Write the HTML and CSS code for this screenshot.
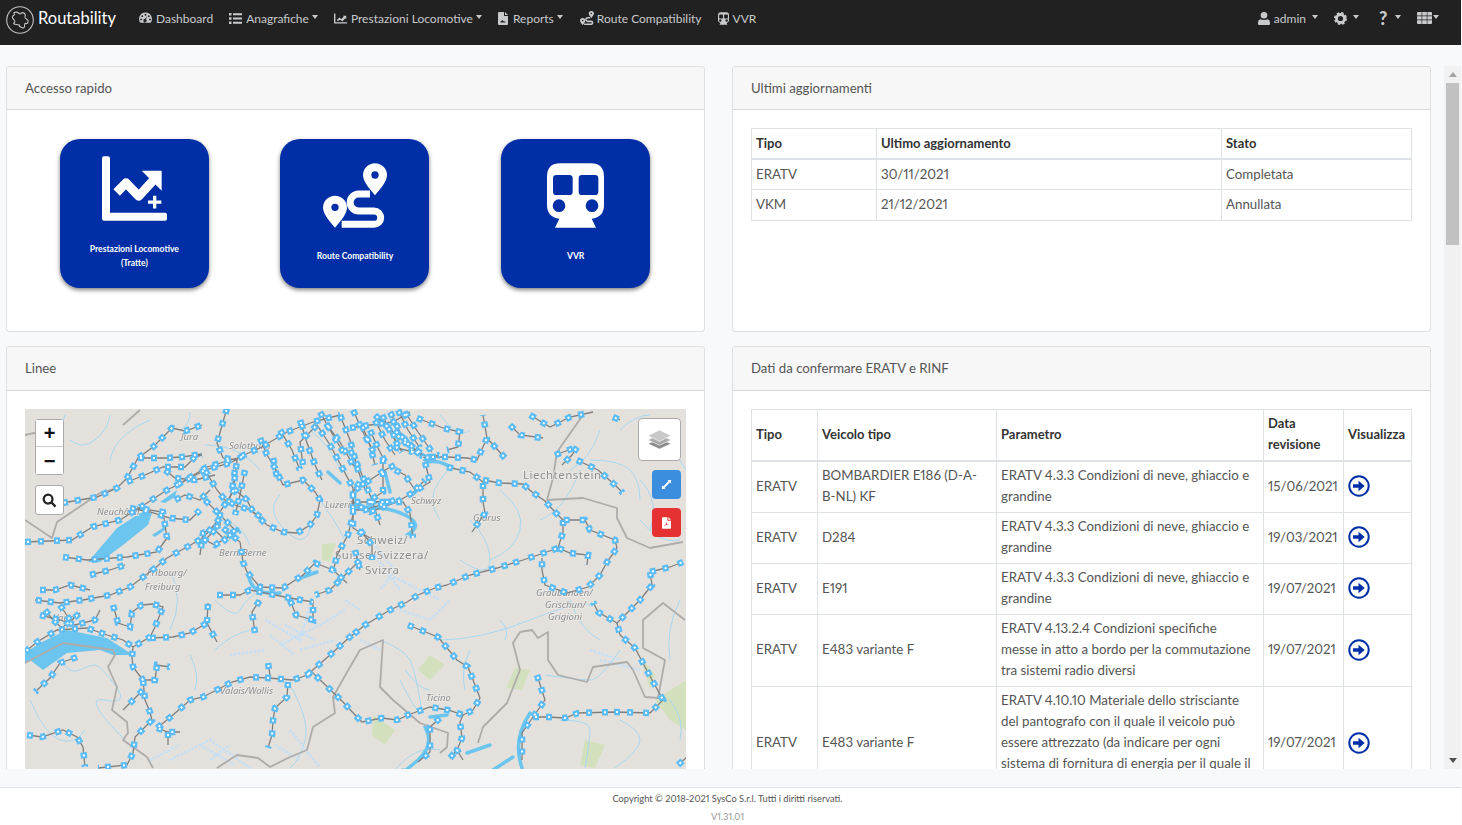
FILE: index.html
```html
<!DOCTYPE html>
<html lang="it">
<head>
<meta charset="utf-8">
<title>Routability</title>
<link rel="stylesheet" href="styles.css">
</head>
<body>
<svg class="sprite" aria-hidden="true">
  <symbol id="i-gauge" viewBox="0 0 14 12"><path fill-rule="evenodd" d="M7 0a7 7 0 0 1 6 10.500q-.3.500-1 .500H2q-.7 0-1-.500A7 7 0 0 1 7 0ZM7 1.500a1 1 0 1 0 0 2 1 1 0 0 0 0-2ZM3.500 3a1 1 0 1 0 0 2 1 1 0 0 0 0-2ZM10.500 3a1 1 0 1 0 0 2 1 1 0 0 0 0-2ZM2.200 6.500a1 1 0 1 0 0 2 1 1 0 0 0 0-2ZM11.800 6.500a1 1 0 1 0 0 2 1 1 0 0 0 0-2ZM8.400 4 6.300 7.200a1.700 1.700 0 1 0 1.300.500Z"/></symbol>
  <symbol id="i-list" viewBox="0 0 13 11"><path d="M0 0h2.500v2.500H0zM4 .3h9v2H4zM0 4.200h2.500v2.500H0zM4 4.500h9v2H4zM0 8.500h2.500V11H0zM4 8.700h9v2H4z"/></symbol>
  <symbol id="i-chart" viewBox="0 0 14 11"><path d="M0 0h1.500v9.500H14V11H1q-1 0-1-1z"/><path d="M3 7.200 6 4.300l2 1.800 2.500-2.600-1-1h3.700v3.700l-1-1-3.300 3.400-2-1.800L4 8.300z"/></symbol>
  <symbol id="i-file" viewBox="0 0 10 13"><path fill-rule="evenodd" d="M1 0h5v3.500q0 .5.500.5H10v8q0 1-1 1H1q-1 0-1-1V1q0-1 1-1ZM7 0l3 3H7ZM2.500 9.500v1h5v-1H5.800L4.500 8Z"/></symbol>
  <symbol id="i-route" viewBox="849 100 192 193"><path fill-rule="evenodd" d="M1005 100a36 36 0 0 1 36 36c0 20-24 45-36 60-12-15-36-40-36-60a36 36 0 0 1 36-36ZM1005 124a11 11 0 1 0 0 22 11 11 0 0 0 0-22ZM885 197a36 36 0 0 1 36 36c0 20-24 45-36 60-12-15-36-40-36-60a36 36 0 0 1 36-36ZM885 221a11 11 0 1 0 0 22 11 11 0 0 0 0-22Z"/><path fill="none" stroke="currentColor" stroke-width="21" d="M990 192H956A25.500 25.500 0 0 0 956 243H1002A20 20 0 0 1 1002 283H905"/></symbol>
  <symbol id="i-train" viewBox="171 100 171 193"><path fill-rule="evenodd" d="M211 100H302Q342 100 342 140V225Q342 262 305 266L318 293H195L208 266Q171 262 171 225V140Q171 100 211 100ZM199 135H238q10 0 10 10V185q0 10-10 10H199q-10 0-10-10V145q0-10 10-10ZM276 135H315q10 0 10 10V185q0 10-10 10H276q-10 0-10-10V145q0-10 10-10ZM188 227a19 19 0 1 0 38 0a19 19 0 1 0-38 0ZM287 227a19 19 0 1 0 38 0a19 19 0 1 0-38 0Z"/></symbol>
  <symbol id="i-user" viewBox="0 0 12 13"><circle cx="6" cy="3.300" r="3.300"/><path d="M2.500 7.300q3.500 1.500 7 0Q12 7.800 12 10.500V12q0 1-1 1H1q-1 0-1-1v-1.500Q0 7.800 2.500 7.300Z"/></symbol>
  <symbol id="i-cog" viewBox="0 0 14 14"><circle cx="7" cy="7" r="4.300" fill="none" stroke="currentColor" stroke-width="3"/><circle cx="7" cy="7" r="6" fill="none" stroke="currentColor" stroke-width="2" stroke-dasharray="2.700 2.010"/></symbol>
  <symbol id="i-grid" viewBox="0 0 15 12"><path d="M0 1q0-1 1-1h3.600v3.500H0ZM5.200 0h4.600v3.500H5.200ZM10.400 0H14q1 0 1 1v2.500h-4.600ZM0 4.200h4.600v3.300H0ZM5.200 4.200h4.600v3.300H5.200ZM10.400 4.200H15v3.300h-4.600ZM0 8.200h4.600V12H1q-1 0-1-1ZM5.200 8.200h4.600V12H5.200ZM10.400 8.200H15V11q0 1-1 1h-3.600Z"/></symbol>
  <symbol id="i-go" viewBox="0 0 22 22"><circle cx="11" cy="11" r="9.700" fill="#fff" stroke="currentColor" stroke-width="2"/><path d="M5 9.300h5.500V5.800L16.700 11l-6.200 5.200v-3.500H5z"/></symbol>
</svg>

<nav class="topbar">
  <a class="brand" href="#">
    <svg class="brand-logo" viewBox="0 0 28 28"><circle cx="14" cy="14" r="13.300"/><path d="M8 6.500q3-1 4.500.5t3 0q1.500-1 3 .5t.5 3q-.5 1.500 1.500 2.500t1.500 3-2 1.500-1.500 2.500-3 1.500-2-2-3-1-2.500-1.500.5-2.500-2-2.500q-.5-2 1-2.500t.5-2.500Z"/></svg>
    <span>Routability</span>
  </a>
  <ul class="menu">
    <li><a href="#"><svg class="ico ico-gauge"><use href="#i-gauge"/></svg>Dashboard</a></li>
    <li><a href="#" class="drop"><svg class="ico ico-list"><use href="#i-list"/></svg>Anagrafiche</a></li>
    <li><a href="#" class="drop"><svg class="ico ico-chart"><use href="#i-chart"/></svg>Prestazioni Locomotive</a></li>
    <li><a href="#" class="drop"><svg class="ico ico-file"><use href="#i-file"/></svg>Reports</a></li>
    <li><a href="#"><svg class="ico ico-route"><use href="#i-route"/></svg>Route Compatibility</a></li>
    <li><a href="#"><svg class="ico ico-train"><use href="#i-train"/></svg>VVR</a></li>
  </ul>
  <ul class="menu menu-end">
    <li><a href="#" class="drop wide"><svg class="ico ico-user"><use href="#i-user"/></svg>admin</a></li>
    <li><a href="#" class="drop wide"><svg class="ico ico-cog"><use href="#i-cog"/></svg></a></li>
    <li class="li-help"><a href="#" class="drop wide"><span class="help">?</span></a></li>
    <li><a href="#" class="drop tight"><svg class="ico ico-grid"><use href="#i-grid"/></svg></a></li>
  </ul>
</nav>

<main class="scroller">
  <div class="dash">
    <section class="card card-short">
      <h2 class="card-title">Accesso rapido</h2>
      <div class="card-body tiles">
        <a class="tile" href="#">
          <svg class="tile-chart" viewBox="186 78 195 194">
            <path fill="#fff" d="M186 84q0-6 6-6h12q6 0 6 6V248H375q6 0 6 6v12q0 6-6 6H192q-6 0-6-6z"/>
            <path fill="none" stroke="#fff" stroke-width="27" stroke-linejoin="round" d="M230 187 258 158 296 198 340 150"/>
            <path fill="#fff" d="M305 122H365V182Z"/>
            <circle cx="344" cy="216" r="28" fill="#002ea6"/>
            <path fill="#fff" d="M339 197h10v14h15v10h-15v14h-10v-14h-15v-10h15z"/>
          </svg>
          <span>Prestazioni Locomotive<br>(Tratte)</span>
        </a>
        <a class="tile" href="#"><svg class="tile-route"><use href="#i-route"/></svg><span>Route Compatibility</span></a>
        <a class="tile" href="#"><svg class="tile-train"><use href="#i-train"/></svg><span>VVR</span></a>
      </div>
    </section>

    <section class="card card-short">
      <h2 class="card-title">Ultimi aggiornamenti</h2>
      <div class="card-body">
        <table class="grid grid-short">
          <thead><tr><th class="c-a">Tipo</th><th class="c-b">Ultimo aggiornamento</th><th>Stato</th></tr></thead>
          <tbody>
            <tr><td>ERATV</td><td>30/11/2021</td><td>Completata</td></tr>
            <tr><td>VKM</td><td>21/12/2021</td><td>Annullata</td></tr>
          </tbody>
        </table>
      </div>
    </section>

    <section class="card">
      <h2 class="card-title">Linee</h2>
      <div class="card-body">
        <div class="map">
          <svg class="map-art" viewBox="25 409 661 440">
            <defs>
              <g id="rails">
                <path d="M25 542 72 540 92 527 120 520 147 503 167 490 183 482 205 470 230 463 245 455"/>
                <path d="M62 503 97 497 117 488 127 478 138 458 153 447 172 428 185 431 202 425"/>
                <path d="M127 482 145 475 163 467 185 467 195 457 202 455M138 458 165 458 182 457 202 454"/>
                <path d="M227 408 217 443 223 458 237 460 233 492 220 512 220 525 203 533 200 555"/>
                <path d="M177 485 207 467 237 458 260 448 287 432 313 422 340 415"/>
                <path d="M260 438 267 455 275 468 283 485 303 480 315 492 320 500 317 515 310 525 297 533 283 532 267 525 253 512 247 500 233 488"/>
                <path d="M223 528 240 542 243 562 247 572 260 587 283 588 303 575 315 563 333 570 347 583"/>
                <path d="M220 518 203 538 187 547 167 558 155 568 130 587 110 595 83 600 60 603 35 600"/>
                <path d="M63 557 87 560 127 557 157 552 167 538 163 512 137 508"/>
                <path d="M217 595 240 595 250 590 290 598 313 602"/>
                <path d="M303 465 300 442 317 425 330 445 353 488 353 515 348 535 337 555 333 572"/>
                <path d="M273 458 277 477M327 425 340 442 353 465 357 468"/>
                <path d="M375 415 393 432 413 448 427 457 447 457 467 458 477 460 487 438 483 415M505 458 487 438"/>
                <path d="M350 428 370 425 393 422 410 412M393 432 397 448 413 452M400 435 423 457"/>
                <path d="M417 418 443 428 460 432 458 447 447 450"/>
                <path d="M510 425 520 435 543 438M530 415 550 427 570 417 593 412M613 417 620 420"/>
                <path d="M425 462 430 482 412 493 397 502 370 512 352 502 390 502"/>
                <path d="M447 467 470 472 483 482 483 502 485 513 472 532"/>
                <path d="M483 480 500 483 523 484 532 492 545 501 555 512 563 520 585 520 590 530 615 540 617 548 607 562 600 575 588 587 567 593 545 585 542 570 542 558"/>
                <path d="M563 520 563 532 558 548 538 555 523 560 497 568 470 575 447 585 435 588 418 595 407 602 390 610 365 625 350 637"/>
                <path d="M558 548 570 553 588 555 587 565"/>
                <path d="M577 447 572 455 562 465M577 460 598 470 615 485 623 493M555 455 577 447"/>
                <path d="M650 572 670 567 683 562M650 572 652 585 640 600 633 607 617 623 598 612 593 602"/>
                <path d="M383 458 383 492 367 502 403 502 410 513 413 538M360 482 353 492 353 528 370 538"/>
                <path d="M25 652 37 642 57 630 87 628 107 635 123 640 133 647 132 657 133 667 143 680 155 680 157 665 170 667"/>
                <path d="M45 610 53 620 62 628 80 613M113 605 118 623 130 627 132 612 142 605 153 604 163 607 155 627 150 637 133 647"/>
                <path d="M150 638 173 637 190 633 207 623 217 642M207 623 208 603"/>
                <path d="M143 690 123 710M143 680 145 700 150 712 152 720 135 737 133 753 127 765 98 768"/>
                <path d="M157 728 173 715 190 700 203 697 232 682 250 677 268 678 293 680 307 675 312 672 343 702 357 717 362 722 382 718 397 720 408 715 430 707 448 710 463 715 460 722 462 738 457 750 463 760"/>
                <path d="M288 682 287 697 275 708 273 720 272 735 268 748"/>
                <path d="M307 675 330 655 352 635"/>
                <path d="M157 728 168 732 180 732M168 732 168 745"/>
                <path d="M27 735 42 737 63 730 77 737 83 747 85 767"/>
                <path d="M77 657 60 663 50 678 35 692"/>
                <path d="M268 663 270 675M255 633 252 612 260 600"/>
                <path d="M290 600 296 615 313 620 313 600"/>
                <path d="M408 625 438 637 457 660 468 667 480 698 473 710 463 715"/>
                <path d="M440 718 430 727 430 742 430 752 418 762"/>
                <path d="M537 675 545 700 533 717 522 733 522 760"/>
                <path d="M533 717 548 717 565 718 578 713 615 712 650 713 663 700 645 667 635 648 620 635 617 623"/>
                <path d="M678 765 687 757M450 758 457 750"/>
                <path d="M375 420 385 440 395 455M382 415 392 435 402 452M390 412 400 432 412 450M398 410 408 430 420 448M405 412 418 432 432 452M370 430 378 448 385 462M362 425 370 445 375 465"/>
                <path d="M300 420 306 440 315 465 322 480M340 415 350 440 358 470 365 490M320 412 330 430 345 455M350 450 360 470 372 500 380 525M353 410 362 430 375 455M280 430 292 450 300 470"/>
                <path d="M40 615 60 620 75 625 95 620 100 610M40 590 55 590 70 585 90 590M60 605 70 620"/>
                <path d="M205 500 215 510 225 520 235 530 225 540 215 530 205 540 215 545 230 535 240 530"/>
                <path d="M205 470 217 490 225 500 235 505 250 510 265 520M175 500 185 495 200 500 210 490M130 508 150 512 170 518 190 520 200 510M165 470 175 478 195 480 215 475"/>
                <path d="M235 470 232 490 228 505M245 470 240 495 235 515M360 560 345 575 330 590 315 595M90 575 110 570 125 565"/>
                <path d="M350 510 365 510 380 505 395 500M355 490 370 480 385 470 395 465M360 530 372 545 372 560M395 470 405 475 415 490 425 480M355 550 360 570M395 430 407 445 425 458 440 455"/>
              </g>
            </defs>
            <rect class="land" x="25" y="409" width="661" height="440"/>
            <g class="green">
              <path d="M322 544 336 543 330 562 322 560Z"/><path d="M515 668 530 670 522 690 506 688Z"/>
              <path d="M373 715 395 730 385 745 372 735Z"/><path d="M655 700 686 680 686 730 670 720Z"/>
              <path d="M430 655 445 665 430 680 418 670Z"/><path d="M585 740 605 745 595 768 580 765Z"/>
              <path d="M640 655 655 675 650 690Z"/>
            </g>
            <g class="rivers">
              <path d="M70 440Q82 450 95 440T110 415M110 460Q115 435 150 420M190 412Q190 425 180 430M205 445Q240 445 260 470M280 495Q265 510 285 530T310 528M320 500Q335 520 345 540"/>
              <path d="M215 520Q240 520 250 545M170 570Q185 600 170 630M215 600Q235 620 240 610T260 590M310 430Q330 445 340 470"/>
              <path d="M440 520Q425 500 440 480T455 470M470 520Q490 540 490 560T460 560M500 490Q525 510 520 530T490 560M540 520Q565 510 580 470M590 460Q620 460 630 470T640 500M640 520Q660 545 680 540"/>
              <path d="M620 430Q635 415 650 415M660 445Q675 450 686 470M570 600Q580 630 600 640M680 600Q665 630 670 660"/>
              <path d="M60 660Q70 675 80 670T95 665 115 685 105 700 125 740M30 700Q45 735 60 740T85 730M190 655Q200 675 195 690M250 630Q230 635 215 650"/>
              <path d="M380 640Q405 650 410 660T420 700 400 680M405 670Q420 690 430 690M440 640Q480 640 530 620T590 605M620 650Q600 680 590 680T545 675"/>
              <path d="M560 720Q590 720 590 730T585 768M620 720Q640 730 640 740T615 768M670 700Q685 720 680 740M290 685Q310 720 305 740T290 768M470 650Q460 670 465 690"/>
              <path d="M395 770Q415 745 440 750M500 620Q510 630 505 640M65 415Q60 440 35 450M440 415Q460 440 470 430M600 430Q590 460 570 470M640 480Q660 500 650 530"/>
            </g>
            <g class="glacier">
              <path d="M265 620 300 640 310 605M280 645 320 625 345 610M300 650 335 640M230 655 265 650M285 625 315 640M270 635 295 655"/>
              <path d="M170 760 210 740 250 768M200 745 235 765M290 730 320 768M275 745 300 760M150 760 180 745M210 760 230 745"/>
              <path d="M370 540 395 570 380 590M390 575 440 600M345 600 360 610M600 660 640 670M360 640 380 650M375 555 400 590"/>
              <path d="M400 610 430 620 450 600M590 650 620 660"/>
            </g>
            <g class="lakes">
              <path d="M88 562 117 528 140 513 152 513 148 525 123 545 100 562Z"/>
              <path d="M160 502 177 490 175 497 165 503Z"/>
              <path d="M152 535 167 525 165 530 155 537Z"/>
              <path d="M25 653 40 643 67 630 107 638 133 655 113 655 100 650 67 653 43 670 30 660 25 663Z"/>
            </g>
            <g class="lake-lines">
              <path d="M248 575Q252 590 262 592T280 593"/><path d="M303 577 317 572"/><path d="M328 472 340 483"/>
              <path d="M427 462Q440 460 450 467"/><path d="M385 472 390 492"/>
              <path d="M353 508Q385 505 405 515T407 535"/>
              <path d="M425 727Q435 745 418 760T403 770M430 717 447 715"/>
              <path d="M530 713Q512 740 522 768M513 757 493 770"/><path d="M467 753 490 745"/>
            </g>
            <g class="borders">
              <path d="M583 415 557 452 553 478 547 500 583 498 617 508 617 518 627 538 650 548 683 542"/>
              <path d="M25 435 57 428M123 425 140 410M25 520 52 538 57 522 100 493 117 488"/>
              <path d="M25 663 63 643 113 650 115 655 108 667 117 687 112 710 127 722 128 733 123 740 133 747 147 757 153 768"/>
              <path d="M217 768 237 755 258 758 270 767 290 757 307 750 313 727 335 713 333 697 350 667 360 650 383 640 380 687 393 700 420 723 448 733 447 747 440 753"/>
              <path d="M478 743 483 727 507 703 520 670 513 643 520 632 532 630 538 638 548 632 548 660 558 675 587 682 593 667 627 662 633 670 645 697 658 698 665 660 643 648 643 620 663 603 685 620"/>
            </g>
            <g class="labels">
              <text x="181" y="440">Jura</text><text x="229" y="449">Solothurn</text>
              <text x="97" y="515">Neuchâtel</text><text x="219" y="556">Bern/Berne</text>
              <text x="147" y="576">Fribourg/</text><text x="145" y="590">Freiburg</text>
              <text x="325" y="508">Luzern</text><text x="411" y="504">Schwyz</text>
              <text x="473" y="521">Glarus</text><text x="53" y="621">Vaud</text>
              <text x="220" y="694">Valais/Wallis</text><text x="426" y="701">Ticino</text>
              <text x="536" y="596">Graubünden/</text><text x="545" y="608">Grischun/</text><text x="548" y="620">Grigioni</text>
            </g>
            <g class="labels-big">
              <text x="523" y="479">Liechtenstein</text><text x="357" y="544">Schweiz/</text>
              <text x="335" y="559">Suisse/Svizzera/</text><text x="365" y="574">Svizra</text>
            </g>
            <use href="#rails" class="line"/>
            <use href="#rails" class="pin"/>
            <use href="#rails" class="pin-dot"/>
          </svg>
          <div class="map-zoom">
            <button class="map-btn">+</button>
            <button class="map-btn">&minus;</button>
          </div>
          <button class="map-search">
            <svg viewBox="0 0 16 16"><circle cx="6.500" cy="6.500" r="4.700"/><path d="M10 10l4.500 4.500"/></svg>
          </button>
          <div class="map-layers">
            <svg viewBox="0 0 26 26"><path class="l3" d="M13 12 25 17.500 13 23 1 17.500Z"/><path class="l2" d="M13 8 25 13.500 13 19 1 13.500Z"/><path class="l1" d="M13 3 25 9 13 15 1 9Z"/></svg>
          </div>
          <button class="map-action action-expand">
            <svg viewBox="0 0 12 12"><path d="M7 1h4v4L9.700 3.700 3.700 9.700 5 11H1V7l1.300 1.300 6-6Z"/></svg>
          </button>
          <button class="map-action action-pdf">
            <svg viewBox="0 0 10 13"><path fill-rule="evenodd" d="M1 0h5v3.500q0 .5.500.5H10v8q0 1-1 1H1q-1 0-1-1V1q0-1 1-1ZM7 0l3 3H7ZM2 9.800 4.300 8l.7-2.300.8 2.100L8 8.600l-2.300-.1-1 .3Z"/></svg>
          </button>
        </div>
      </div>
    </section>

    <section class="card">
      <h2 class="card-title">Dati da confermare ERATV e RINF</h2>
      <div class="card-body">
        <table class="grid grid-long">
          <thead>
            <tr><th class="c-1">Tipo</th><th class="c-2">Veicolo tipo</th><th class="c-3">Parametro</th><th class="c-4">Data revisione</th><th>Visualizza</th></tr>
          </thead>
          <tbody>
            <tr><td>ERATV</td><td>BOMBARDIER E186 (D-A-<br>B-NL) KF</td><td>ERATV 4.3.3 Condizioni di neve, ghiaccio e grandine</td><td>15/06/2021</td><td><svg class="go"><use href="#i-go"/></svg></td></tr>
            <tr><td>ERATV</td><td>D284</td><td>ERATV 4.3.3 Condizioni di neve, ghiaccio e grandine</td><td>19/03/2021</td><td><svg class="go"><use href="#i-go"/></svg></td></tr>
            <tr><td>ERATV</td><td>E191</td><td>ERATV 4.3.3 Condizioni di neve, ghiaccio e grandine</td><td>19/07/2021</td><td><svg class="go"><use href="#i-go"/></svg></td></tr>
            <tr><td>ERATV</td><td>E483 variante F</td><td>ERATV 4.13.2.4 Condizioni specifiche<br>messe in atto a bordo per la commutazione<br>tra sistemi radio diversi</td><td>19/07/2021</td><td><svg class="go"><use href="#i-go"/></svg></td></tr>
            <tr><td>ERATV</td><td>E483 variante F</td><td>ERATV 4.10.10 Materiale dello strisciante del pantografo con il quale il veicolo può essere attrezzato (da indicare per ogni sistema di fornitura di energia per il quale il veicolo è attrezzato)</td><td>19/07/2021</td><td><svg class="go"><use href="#i-go"/></svg></td></tr>
          </tbody>
        </table>
      </div>
    </section>
  </div>
  <div class="rail" aria-hidden="true">
    <span class="rail-up"></span>
    <span class="rail-thumb"></span>
    <span class="rail-down"></span>
  </div>
</main>

<footer class="foot">
  <p>Copyright © 2018-2021 SysCo S.r.l. Tutti i diritti riservati.</p>
  <p class="ver">V1.31.01</p>
</footer>
</body>
</html>
```

FILE: styles.css
```css
* { box-sizing: border-box; }
html, body { height: 100%; }
body {
  margin: 0;
  padding-right: 1px;
  display: flex;
  flex-direction: column;
  overflow: hidden;
  background: #f8f9fa;
  color: #555;
  font-family: "Lato", "Noto Sans", sans-serif;
  font-size: 13.3px;
  line-height: 21px;
  font-variant-numeric: proportional-nums;
}
a { color: inherit; text-decoration: none; }
.sprite { display: none; }

/* top bar */
.topbar {
  flex: none;
  height: 45px;
  display: flex;
  align-items: center;
  padding: 0 22px 9px 6px;
  background: #212121;
  color: #c8cacc;
}
.brand { display: flex; align-items: center; margin-right: 23px; color: #fff; font-size: 16.5px; }
.brand-logo { width: 28px; height: 28px; margin-right: 4px; margin-top: 3px; fill: none; stroke: #c4c4c4; stroke-width: 1.1; }
.menu { display: flex; align-items: center; gap: 16px; margin: 0; padding: 0; list-style: none; font-size: 12px; }
.menu-end { margin-left: auto; }
.menu a { display: flex; align-items: center; height: 21px; }
.drop::after {
  content: "";
  margin-left: 3px;
  border-top: 4px solid currentColor;
  border-left: 3.5px solid transparent;
  border-right: 3.5px solid transparent;
  transform: translateY(-1px);
}
.drop.wide::after { margin-left: 6px; }
.drop.tight::after { margin-left: 1px; }
.li-help { margin: 0 0 0 4px; }
.ico { fill: currentColor; color: #c8cacc; margin-right: 4px; height: 13px; }
.ico-gauge { width: 13px; height: 12px; }
.ico-list { width: 13px; height: 11px; margin-right: 4px; }
.ico-chart { width: 13px; height: 11px; }
.ico-file { width: 10px; height: 13px; margin-right: 5px; }
.ico-route { width: 14px; height: 14px; margin: 0 3px 0 1px; }
.ico-train { width: 11px; height: 13px; }
.ico-user { width: 12px; height: 13px; }
.ico-cog { width: 13px; height: 13px; margin-right: 0; }
.ico-grid { width: 15px; height: 12px; margin-right: 0; }
.help { font-size: 18px; font-weight: 900; width: 10px; }

/* scrolling dashboard */
.scroller {
  position: relative;
  flex: none;
  height: 703px;
  margin-top: 21px;
  padding: 0 13px 0 6px;
  overflow: hidden;
}
.rail {
  position: absolute;
  right: 0;
  top: 0;
  bottom: 0;
  width: 17px;
  padding: 0 2px;
  display: flex;
  flex-direction: column;
  background: #f1f1f1;
}
.rail-up, .rail-down { display: flex; justify-content: center; align-items: center; flex: none; height: 17px; }
.rail-up::before { content: ""; border-bottom: 5px solid #a3a3a3; border-left: 4.5px solid transparent; border-right: 4.5px solid transparent; }
.rail-down { margin-top: auto; }
.rail-down::before { content: ""; border-top: 5px solid #505050; border-left: 4.5px solid transparent; border-right: 4.5px solid transparent; }
.rail-thumb { flex: none; height: 162px; background: #c1c1c1; }
.dash {
  display: grid;
  grid-template-columns: 699px 699px;
  align-items: start;
  column-gap: 27px;
  row-gap: 14px;
  align-content: start;
}

/* cards */
.card { background: #fff; border: 1px solid rgba(0,0,0,.125); border-radius: 4px; }
.card-short { height: 266px; }
.card-title {
  margin: 0;
  height: 44px;
  padding: 11px 18px 10px;
  background: #f7f7f7;
  border-bottom: 1px solid rgba(0,0,0,.125);
  border-radius: 3px 3px 0 0;
  font-size: 13.2px;
  font-weight: 400;
  color: #555;
}
.card-short .card-title { height: 43px; }
.card-body { padding: 18px; }

/* tiles */
.tiles { display: grid; grid-template-columns: repeat(3, 1fr); padding: 29px 18px 18px 17px; }
.tile {
  justify-self: center;
  width: 149px;
  height: 149px;
  padding-bottom: 2px;
  display: flex;
  flex-direction: column;
  align-items: center;
  justify-content: center;
  gap: 21px;
  background: #002ea6;
  border-radius: 20px;
  box-shadow: 0 2px 4px rgba(0,0,0,.5);
  color: #fff;
  font-size: 8.6px;
  font-weight: 700;
  line-height: 14px;
  text-align: center;
}
.tile svg { fill: #fff; color: #fff; flex: none; }
.tile-chart { width: 65px; height: 65px; }
.tile-route { width: 64px; height: 65px; }
.tile-train { width: 57px; height: 65px; }

/* tables */
.grid { width: 100%; table-layout: fixed; border-collapse: collapse; }
.grid th, .grid td { padding: 4px; border: 1px solid #dee2e6; text-align: left; font-weight: 400; vertical-align: middle; }
.grid th { color: #333; font-weight: 700; font-size: 13px; border-bottom-width: 2px; }
.grid-short td { height: 30.5px; }
.grid-long th, .grid-long td { padding: 3px 4px 5px; }
.c-a { width: 125px; }
.c-b { width: 345px; }
.c-1 { width: 66px; }
.c-2 { width: 179px; }
.c-3 { width: 267px; }
.c-4 { width: 80px; }
.go { display: block; width: 22px; height: 22px; fill: #002ea6; color: #002ea6; }

/* map */
.map { position: relative; height: 440px; overflow: hidden; }
.map-art { display: block; width: 661px; height: 440px; filter: blur(.5px); }
.land { fill: #e4e1dc; }
.green path { fill: #d3e0bd; stroke: none; }
.rivers path { fill: none; stroke: #a5d8f2; stroke-width: 1; }
.glacier path { fill: none; stroke: #c4e0f8; stroke-width: 2.5; stroke-dasharray: 2.5 1.5; }
.lakes path { fill: #6cc5ef; }
.lake-lines path { fill: none; stroke: #6cc5ef; stroke-width: 3.5; stroke-linejoin: round; stroke-linecap: round; }
.borders path { fill: none; stroke: #aeacaa; stroke-width: 1.8; stroke-linejoin: round; }
.labels text, .labels-big text { fill: #8d8d8d; font-family: "Noto Sans", sans-serif; stroke: #ecebe8; stroke-width: 1.5; paint-order: stroke; }
.labels text { font-size: 9.5px; font-style: italic; }
.labels-big text { font-size: 11.5px; letter-spacing: .5px; }
.line { fill: none; stroke: #7f7f7f; stroke-width: 1.3; }
.pin { fill: none; stroke: #5cbcf6; stroke-width: 6.5; stroke-dasharray: 6 7 6 10 6 6; }
.pin-dot { fill: none; stroke: #fff; stroke-width: 2; stroke-dasharray: 2 11 2 14 2 10; stroke-dashoffset: -2; }
.map-zoom { position: absolute; left: 10px; top: 10px; width: 29px; background: #fff; border: 1px solid #aaa; border-radius: 3px; }
.map-btn { display: block; width: 27px; height: 27px; padding: 0; border: 0; border-bottom: 1px solid #ccc; background: #fff; color: #111; font: 700 20px/26px "Liberation Sans", sans-serif; }
.map-btn:last-child { border-bottom: 0; }
.map-search { position: absolute; left: 10px; top: 76px; width: 29px; height: 30px; padding: 6px; background: #fff; border: 1px solid #aaa; border-radius: 3px; }
.map-search svg { display: block; fill: none; stroke: #222; stroke-width: 2.4; }
.map-layers { position: absolute; left: 613px; top: 9px; width: 43px; height: 43px; padding: 8px; background: #fff; border: 1px solid #aaa; border-radius: 4px; }
.map-layers svg { display: block; width: 25px; height: 25px; stroke: #fff; stroke-width: .6; }
.l1 { fill: #c8c8c8; } .l2 { fill: #a8a8a8; } .l3 { fill: #8a8a8a; }
.map-action { position: absolute; left: 627px; width: 29px; height: 29px; padding: 0; display: flex; align-items: center; justify-content: center; border: 0; border-radius: 4px; }
.map-action svg { fill: #fff; display: block; }
.action-expand { top: 61px; background: #3a8edd; }
.action-expand svg { width: 11px; height: 11px; }
.action-pdf { top: 99px; background: #e53131; }
.action-pdf svg { width: 9px; height: 12px; }

/* footer */
.foot {
  flex: none;
  margin-top: 18px;
  height: 38px;
  padding: 2px 6px 0 0;
  background: #fff;
  border-top: 1px solid #dee2e6;
  text-align: center;
  font-size: 9.3px;
  line-height: 18px;
  color: #555;
}
.foot p { margin: 0; }
.ver { color: #999; }
```
